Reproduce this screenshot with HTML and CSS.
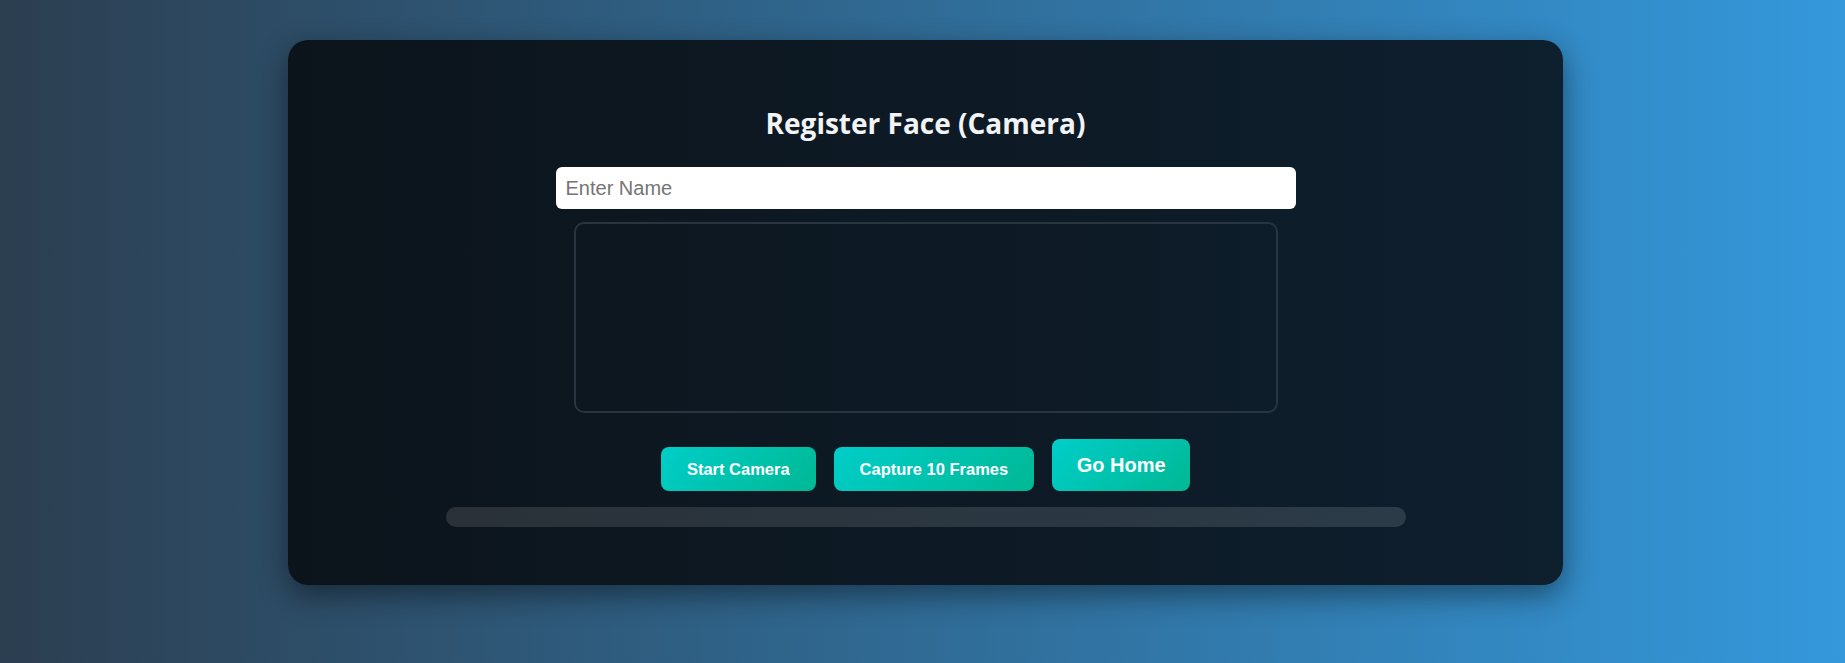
FILE: index.html
```html
<!DOCTYPE html>
<html>
<head>
<meta charset="utf-8">
<title>Register Face (Camera)</title>
<link rel="stylesheet" href="styles.css">
</head>
<body>
<div class="page">
  <div class="card">
    <h2 class="title">Register Face (Camera)</h2>
    <input class="name-input" type="text" placeholder="Enter Name">
    <div class="video-box"></div>
    <div class="actions">
      <button class="btn">Start Camera</button>
      <button class="btn">Capture 10 Frames</button>
      <a class="btn btn-home" href="#">Go Home</a>
    </div>
    <div class="progress"><div class="progress-fill"></div></div>
  </div>
</div>
</body>
</html>
```

FILE: styles.css
```css
html, body {
  margin: 0;
  padding: 0;
  height: 100%;
}
body {
  background: linear-gradient(to right, #2c3e50, #3498db);
  font-family: "Liberation Sans", Arial, sans-serif;
  overflow: hidden;
}
.page {
  display: flex;
  justify-content: center;
  padding: 40px 0 0 6px;
}
.card {
  width: 1275px;
  box-sizing: border-box;
  height: 545px;
  border-radius: 20px;
  background: linear-gradient(to right, #0c141b, #0e1f2e);
  box-shadow: 0 10px 30px rgba(0, 0, 0, 0.45);
  display: flex;
  flex-direction: column;
  align-items: center;
  padding-top: 67px;
}
.title {
  margin: 0;
  font-family: "Open Sans", "Noto Sans", sans-serif;
  font-weight: 700;
  font-size: 28px;
  line-height: 32px;
  color: #f1f3f5;
}
.name-input {
  margin-top: 28px;
  width: 740px;
  height: 42px;
  box-sizing: border-box;
  border: none;
  border-radius: 6px;
  padding: 0 10px;
  font-family: "Liberation Sans", Arial, sans-serif;
  font-size: 20px;
  background: #fff;
  color: #222;
  outline: none;
}
.name-input::placeholder {
  color: #757575;
}
.video-box {
  margin-top: 13px;
  width: 704px;
  height: 191px;
  box-sizing: border-box;
  border: 2px solid #28343f;
  border-radius: 10px;
}
.actions {
  margin-top: 26px;
  display: flex;
  align-items: flex-end;
  justify-content: center;
  gap: 18px;
}
.btn {
  display: inline-block;
  box-sizing: border-box;
  height: 44px;
  border: none;
  border-radius: 8px;
  background: linear-gradient(135deg, #00cec9, #00b894);
  color: #fff;
  font-family: "Liberation Sans", Arial, sans-serif;
  font-weight: 700;
  font-size: 16.5px;
  line-height: 19px;
  padding: 13px 26px 12px;
  text-decoration: none;
  cursor: pointer;
}
.btn-home {
  height: 52px;
  font-size: 20px;
  line-height: 23px;
  padding: 15px 24.5px 14px;
}
.progress {
  margin-top: 16px;
  width: 960px;
  height: 20px;
  border-radius: 10px;
  background: linear-gradient(to right, #2a3138, #2b3b48);
  overflow: hidden;
}
.progress-fill {
  width: 0;
  height: 100%;
  background: #00b894;
}
```
